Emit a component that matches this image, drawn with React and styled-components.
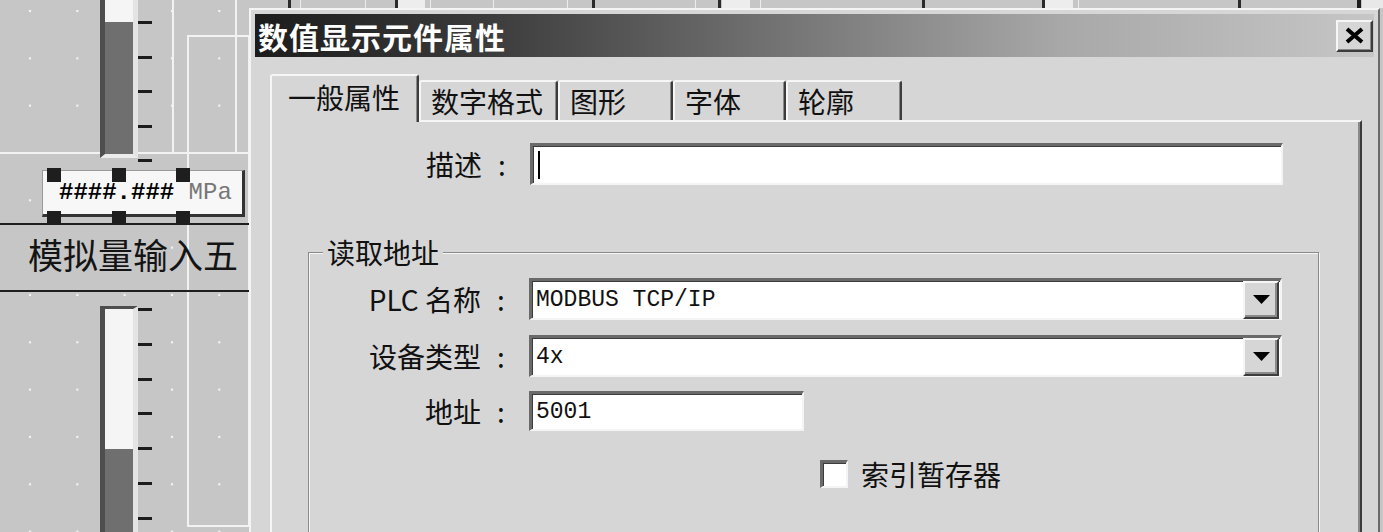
import styled, { createGlobalStyle } from "styled-components";

const FACE = "#d6d6d6";

const GlobalStyle = createGlobalStyle`
  html, body {
    margin: 0;
    padding: 0;
    background: #c6c6c6;
  }
  body {
    font-family: "Noto Sans CJK SC", "Liberation Sans", sans-serif;
  }
`;

// editor canvas with the dotted snap grid
const Screen = styled.div`
  position: relative;
  width: 1383px;
  height: 532px;
  overflow: hidden;
  background-color: #c6c6c6;
  background-image: radial-gradient(circle at center, #f4f4f4 0 1.1px, transparent 1.6px);
  background-size: 47.33px 47.33px;
  background-position: 6.33px 34.67px;
`;

const Stroke = styled.div`
  position: absolute;
  left: ${(p) => p.$x}px;
  top: ${(p) => p.$y}px;
  width: ${(p) => p.$w}px;
  height: ${(p) => p.$h}px;
  background: ${(p) => p.$color};
`;

const Frame = styled.div`
  position: absolute;
  left: 187px;
  top: 35px;
  width: 63px;
  height: 492px;
  box-sizing: border-box;
  border: 2px solid #f2f2f2;
`;

const GaugeWrap = styled.div`
  position: absolute;
  left: 100px;
  top: ${(p) => p.$y}px;
  display: flex;
  align-items: flex-start;
`;

const GaugeBar = styled.div`
  width: 28px;
  height: ${(p) => p.$h}px;
  border-left: 5px solid #4e4e4e;
  border-top: 3px solid #4e4e4e;
  border-right: 5px solid #e4e4e4;
  border-bottom: 4px solid #ececec;
  background: linear-gradient(
    to bottom,
    #f5f5f5 ${(p) => p.$empty}px,
    #6f6f6f ${(p) => p.$empty}px
  );
`;

const Ticks = styled.div`
  display: flex;
  flex-direction: column;
  gap: ${(p) => p.$gap}px;
  padding-top: ${(p) => p.$offset}px;
`;

const Tick = styled.span`
  display: block;
  width: 14px;
  height: 3px;
  background: #1c1c1c;
`;

const NumBox = styled.div`
  position: absolute;
  left: 42px;
  top: 170px;
  width: 203px;
  height: 47px;
  box-sizing: border-box;
  display: flex;
  align-items: center;
  padding-left: 16px;
  background: #f7f7f7;
  border: 1px solid #9a9a9a;
  border-right: 3px solid #333;
  border-bottom: 3px solid #333;
  font-family: "Liberation Mono", monospace;
  font-size: 24px;
  white-space: pre;
`;

const Hashes = styled.span`
  font-weight: bold;
  color: #000;
`;

const Unit = styled.span`
  color: #777;
`;

const Handle = styled.div`
  position: absolute;
  left: ${(p) => p.$x}px;
  top: ${(p) => p.$y}px;
  width: 14px;
  height: 14px;
  background: #1e1e1e;
`;

const AreaLabel = styled.div`
  position: absolute;
  left: 28px;
  top: 236px;
  font-size: 35px;
  line-height: 36px;
  color: #141414;
`;

// --- dialog window ---

const Window = styled.div`
  position: absolute;
  left: 249px;
  top: 8px;
  width: 1131px;
  height: 540px;
  box-sizing: border-box;
  display: flex;
  flex-direction: column;
  padding: 4px 4px 0 4px;
  background: ${FACE};
  border-top: 2px solid #f4f4f4;
  border-left: 2px solid #f4f4f4;
  border-right: 2px solid #6a6a6a;
`;

const TitleBar = styled.div`
  height: 43px;
  flex-shrink: 0;
  display: flex;
  align-items: center;
  justify-content: space-between;
  padding: 0 1px 0 3px;
  background: linear-gradient(
    to right,
    #1c1c1c 0%,
    #3a3a3a 20%,
    #7a7a7a 50%,
    #a8a8a8 72%,
    #c6c6c6 100%
  );
`;

const Title = styled.span`
  color: #fff;
  font-size: 30px;
  font-weight: bold;
  letter-spacing: 1px;
  line-height: 1;
`;

const CloseButton = styled.button`
  width: 37px;
  height: 32px;
  padding: 0;
  display: flex;
  align-items: center;
  justify-content: center;
  background: ${FACE};
  border: 2px solid;
  border-color: #f6f6f6 #3c3c3c #3c3c3c #f6f6f6;
  box-shadow: inset -1px -1px 0 #888;
`;

const TabRow = styled.div`
  display: flex;
  align-items: flex-end;
  margin: 17px 0 0 15px;
  height: 46px;
  flex-shrink: 0;
`;

const Tab = styled.div`
  position: relative;
  z-index: ${(p) => (p.$active ? 2 : 1)};
  width: ${(p) => p.$w}px;
  height: ${(p) => (p.$active ? 48 : 40)}px;
  margin-bottom: ${(p) => (p.$active ? -2 : 0)}px;
  box-sizing: border-box;
  display: flex;
  align-items: center;
  padding: ${(p) => (p.$active ? "0 0 4px 16px" : "0 0 0 10px")};
  background: ${FACE};
  border-top: 2px solid #f6f6f6;
  border-left: 2px solid #f6f6f6;
  border-right: 2px solid #3c3c3c;
  border-top-left-radius: 3px;
  border-top-right-radius: 3px;
  box-shadow: inset -1px 0 0 #8a8a8a;
  font-size: 28px;
  color: #111;
`;

const Panel = styled.div`
  flex: 1;
  margin: 0 12px 0 15px;
  padding-top: 21px;
  background: ${FACE};
  border-top: 2px solid #f6f6f6;
  border-left: 2px solid #f6f6f6;
  border-right: 2px solid #3c3c3c;
  box-shadow: inset -2px 0 0 #8a8a8a;
`;

const Row = styled.div`
  display: flex;
  align-items: center;
  margin-top: ${(p) => p.$top || 0}px;
`;

const Label = styled.div`
  width: ${(p) => p.$w}px;
  flex-shrink: 0;
  display: flex;
  justify-content: flex-end;
  align-items: center;
  padding-right: 8px;
  box-sizing: border-box;
  font-size: 28px;
  color: #111;
  white-space: pre;
`;

const Colon = styled.span`
  width: 40px;
  text-align: center;
`;

const Field = styled.div`
  width: ${(p) => p.$w}px;
  height: ${(p) => p.$h}px;
  box-sizing: border-box;
  display: flex;
  align-items: center;
  padding-left: 4px;
  background: #fff;
  border-style: solid;
  border-width: 3px 2px 2px 3px;
  border-color: #6a6a6a #f4f4f4 #f4f4f4 #6a6a6a;
  box-shadow: inset 1px 1px 0 #3c3c3c;
  font-family: "Liberation Mono", monospace;
  font-size: 23px;
  color: #111;
  white-space: pre;
`;

const Caret = styled.span`
  width: 2px;
  height: 28px;
  margin-left: 1px;
  background: #000;
`;

const Value = styled.span`
  flex: 1;
`;

const DropButton = styled.div`
  width: 36px;
  height: 38px;
  margin-right: 1px;
  box-sizing: border-box;
  display: flex;
  align-items: center;
  justify-content: center;
  background: ${FACE};
  border: 2px solid;
  border-color: #f6f6f6 #3c3c3c #3c3c3c #f6f6f6;
  box-shadow: inset -2px -2px 0 #8a8a8a;
`;

const Group = styled.fieldset`
  margin: 49px 41px 0 36px;
  padding: 0 0 40px 0;
  min-width: 0;
  border: 1px solid #8a8a8a;
  box-shadow: inset 1px 1px 0 #f6f6f6, 1px 1px 0 #f6f6f6;
`;

const Legend = styled.legend`
  margin-left: 14px;
  padding: 0 4px;
  font-size: 28px;
  line-height: 36px;
  color: #111;
  background: ${FACE};
`;

const CheckRow = styled.label`
  display: flex;
  align-items: center;
  gap: 13px;
  margin: 23px 0 0 511px;
  font-size: 28px;
  color: #111;
`;

const CheckBox = styled.span`
  width: 28px;
  height: 28px;
  box-sizing: border-box;
  background: #fff;
  border-style: solid;
  border-width: 3px 2px 2px 3px;
  border-color: #6a6a6a #f4f4f4 #f4f4f4 #6a6a6a;
  box-shadow: inset 1px 1px 0 #3c3c3c;
`;

const topMarks = [
  { x: 288, w: 3, c: "#2a2a2a" },
  { x: 300, w: 1, c: "#ececec" },
  { x: 365, w: 1, c: "#ececec" },
  { x: 395, w: 3, c: "#2a2a2a" },
  { x: 398, w: 27, c: "#ededed" },
  { x: 430, w: 1, c: "#ececec" },
  { x: 493, w: 1, c: "#ececec" },
  { x: 567, w: 1, c: "#ececec" },
  { x: 592, w: 3, c: "#2a2a2a" },
  { x: 695, w: 1, c: "#ececec" },
  { x: 718, w: 3, c: "#2a2a2a" },
  { x: 722, w: 28, c: "#ededed" },
  { x: 760, w: 1, c: "#ececec" },
  { x: 922, w: 3, c: "#2a2a2a" },
  { x: 1042, w: 3, c: "#2a2a2a" },
  { x: 1045, w: 28, c: "#ededed" },
  { x: 1078, w: 1, c: "#ececec" },
  { x: 1238, w: 3, c: "#2a2a2a" },
  { x: 1357, w: 4, c: "#1e1e1e" },
  { x: 1362, w: 21, c: "#e8e8e8" },
];

const handles = [
  [47, 168],
  [112, 168],
  [176, 168],
  [47, 211],
  [112, 211],
  [176, 211],
];

const tabs = [
  { label: "一般属性", w: 149, active: true },
  { label: "数字格式", w: 139 },
  { label: "图形", w: 115 },
  { label: "字体", w: 113 },
  { label: "轮廓", w: 116 },
];

const Arrow = () => (
  <svg width="17" height="9" viewBox="0 0 17 9">
    <polygon points="0,0 17,0 8.5,9" fill="#000" />
  </svg>
);

const Combo = ({ value }) => (
  <Field $w={753} $h={42}>
    <Value>{value}</Value>
    <DropButton>
      <Arrow />
    </DropButton>
  </Field>
);

export default function App() {
  return (
    <Screen>
      <GlobalStyle />

      {topMarks.map((m) => (
        <Stroke key={m.x} $x={m.x} $y={0} $w={m.w} $h={8} $color={m.c} />
      ))}

      <Stroke $x={172} $y={0} $w={2} $h={154} $color="#f2f2f2" />
      <Stroke $x={235} $y={0} $w={2} $h={154} $color="#f2f2f2" />
      <Stroke $x={0} $y={152} $w={250} $h={2} $color="#f2f2f2" />
      <Frame />

      <GaugeWrap $y={-10}>
        <GaugeBar $h={161} $empty={29} />
        <Ticks $gap={31.5} $offset={31}>
          {[0, 1, 2, 3, 4].map((i) => (
            <Tick key={i} />
          ))}
        </Ticks>
      </GaugeWrap>

      <GaugeWrap $y={306}>
        <GaugeBar $h={231} $empty={140} />
        <Ticks $gap={31.8} $offset={2}>
          {[0, 1, 2, 3, 4, 5, 6].map((i) => (
            <Tick key={i} />
          ))}
        </Ticks>
      </GaugeWrap>

      <Stroke $x={0} $y={223} $w={249} $h={2} $color="#1e1e1e" />
      <Stroke $x={0} $y={290} $w={249} $h={2} $color="#1e1e1e" />
      <AreaLabel>模拟量输入五</AreaLabel>

      <NumBox>
        <Hashes>####.###</Hashes>
        <Unit> MPa</Unit>
      </NumBox>
      {handles.map(([x, y]) => (
        <Handle key={`${x}-${y}`} $x={x} $y={y} />
      ))}

      <Window>
        <TitleBar>
          <Title>数值显示元件属性</Title>
          <CloseButton aria-label="关闭">
            <svg width="19" height="17" viewBox="0 0 19 17">
              <path d="M2 2 L17 15 M17 2 L2 15" stroke="#000" strokeWidth="4" />
            </svg>
          </CloseButton>
        </TitleBar>

        <TabRow>
          {tabs.map((t) => (
            <Tab key={t.label} $w={t.w} $active={t.active}>
              {t.label}
            </Tab>
          ))}
        </TabRow>

        <Panel>
          <Row>
            <Label $w={258}>
              描述
              <Colon>:</Colon>
            </Label>
            <Field $w={753} $h={42}>
              <Caret />
            </Field>
          </Row>

          <Group>
            <Legend>读取地址</Legend>
            <Row $top={8}>
              <Label $w={220}>
                PLC 名称
                <Colon>:</Colon>
              </Label>
              <Combo value="MODBUS TCP/IP" />
            </Row>
            <Row $top={15}>
              <Label $w={220}>
                设备类型
                <Colon>:</Colon>
              </Label>
              <Combo value="4x" />
            </Row>
            <Row $top={14}>
              <Label $w={220}>
                地址
                <Colon>:</Colon>
              </Label>
              <Field $w={275} $h={40}>
                5001
              </Field>
            </Row>
            <CheckRow>
              <CheckBox />
              索引暂存器
            </CheckRow>
          </Group>
        </Panel>
      </Window>
    </Screen>
  );
}
